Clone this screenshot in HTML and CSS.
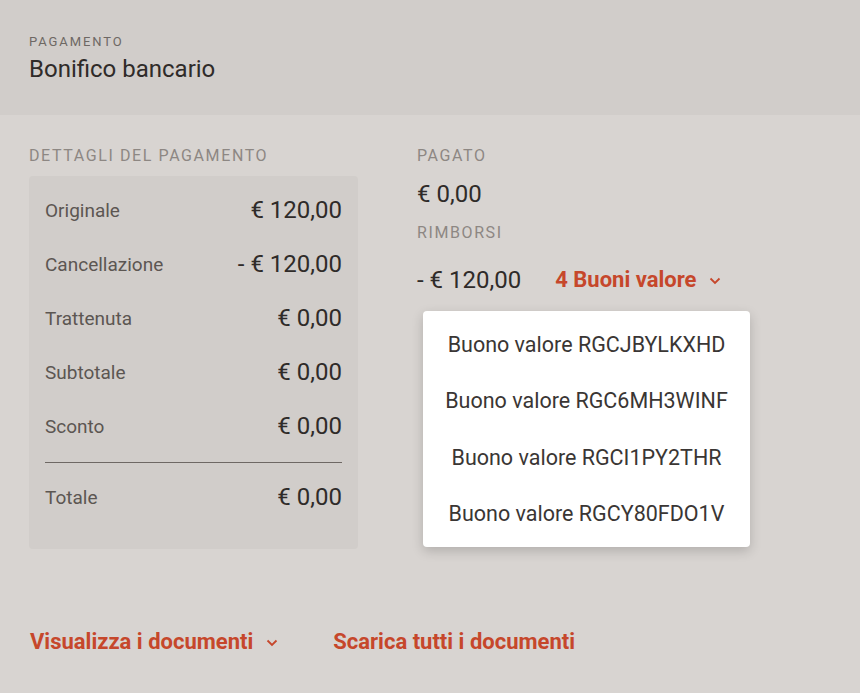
FILE: index.html
```html
<!DOCTYPE html>
<html lang="it">
  <head>
    <meta charset="UTF-8" />
    <meta name="viewport" content="width=device-width, initial-scale=1.0" />
    <title>Pagamento</title>
    <link rel="stylesheet" href="styles.css">
  </head>

  <body>
    <header class="head">
      <div class="label">Pagamento</div>
      <div class="method">Bonifico bancario</div>
    </header>

    <section class="main">
      <div class="details">
        <div class="label big">Dettagli del pagamento</div>
        <div class="card">
          <div class="row"><span>Originale</span><span class="val">€ 120,00</span></div>
          <div class="row"><span>Cancellazione</span><span class="val">- € 120,00</span></div>
          <div class="row"><span>Trattenuta</span><span class="val">€ 0,00</span></div>
          <div class="row"><span>Subtotale</span><span class="val">€ 0,00</span></div>
          <div class="row"><span>Sconto</span><span class="val">€ 0,00</span></div>
          <hr class="sep">
          <div class="row"><span>Totale</span><span class="val">€ 0,00</span></div>
        </div>
      </div>

      <div class="paid">
        <div class="label big">Pagato</div>
        <div class="amount">€ 0,00</div>
        <div class="label big">Rimborsi</div>
        <div class="refund">
          <span class="amount">- € 120,00</span>
          <span class="link">4 Buoni valore
            <svg class="chev" width="12" height="8" viewBox="0 0 12 8"><path d="M1.5 1.5 L6 6 L10.5 1.5" fill="none" stroke="currentColor" stroke-width="1.8"/></svg>
          </span>
          <ul class="menu">
            <li>Buono valore RGCJBYLKXHD</li>
            <li>Buono valore RGC6MH3WINF</li>
            <li>Buono valore RGCI1PY2THR</li>
            <li>Buono valore RGCY80FDO1V</li>
          </ul>
        </div>
      </div>
    </section>

    <footer class="docs">
      <span class="link">Visualizza i documenti
        <svg class="chev" width="12" height="8" viewBox="0 0 12 8"><path d="M1.5 1.5 L6 6 L10.5 1.5" fill="none" stroke="currentColor" stroke-width="1.8"/></svg>
      </span>
      <span class="link">Scarica tutti i documenti</span>
    </footer>
  </body>
</html>
```

FILE: styles.css
```css
*{
  padding: 0;
  margin: 0;
  box-sizing: border-box;
}
body {
  width: 860px;
  height: 693px;
  background-color: #d8d4d1;
  font-family: Roboto, "Liberation Sans", sans-serif;
  color: #2f2b29;
  overflow: hidden;
}
ul {
  list-style: none;
}
.head {
  height: 115px;
  background-color: #d1cdca;
  padding: 34px 29px 0;
}
.label {
  font-size: 13px;
  letter-spacing: 1.9px;
  text-transform: uppercase;
  color: #6e6864;
  line-height: 16px;
}
.label.big {
  font-size: 16px;
  letter-spacing: 1.6px;
  color: #8d8783;
  line-height: 18px;
}
.method {
  font-size: 24px;
  margin-top: 4px;
  line-height: 30px;
  color: #2f2b29;
}
.main {
  display: flex;
  padding: 32px 0 0 29px;
  gap: 59px;
}
.details {
  width: 329px;
}
.card {
  margin-top: 11px;
  background-color: #d1cdca;
  border-radius: 4px;
  padding: 7px 16px 25px;
}
.row {
  display: flex;
  justify-content: space-between;
  align-items: center;
  height: 54px;
  font-size: 19px;
  color: #5c5652;
}
.row .val {
  font-size: 24px;
  color: #2f2b29;
}
.sep {
  border: none;
  border-top: 1px solid #6e6864;
  margin: 9px 0 7px;
}
.paid {
  display: flex;
  flex-direction: column;
}
.amount {
  font-size: 24px;
  color: #2f2b29;
  line-height: 30px;
  margin: 14px 0 15px;
}
.refund {
  position: relative;
  display: flex;
  align-items: center;
  gap: 34px;
  margin-top: 23px;
}
.refund .amount {
  margin: 0;
}
.link {
  display: inline-flex;
  align-items: center;
  gap: 13px;
  color: #c6472b;
  font-weight: 700;
  font-size: 22px;
  line-height: 30px;
}
.chev {
  margin-top: 2px;
}
.menu {
  position: absolute;
  top: 46px;
  left: 6px;
  width: 327px;
  background-color: #fff;
  border-radius: 4px;
  box-shadow: 0 4px 12px rgba(0, 0, 0, 0.18);
  padding: 5px 0;
}
.menu li {
  height: 56.5px;
  display: flex;
  justify-content: center;
  align-items: center;
  font-size: 21.5px;
  color: #3a3634;
}
.docs {
  display: flex;
  gap: 55px;
  padding: 78px 0 0 30px;
}
```
